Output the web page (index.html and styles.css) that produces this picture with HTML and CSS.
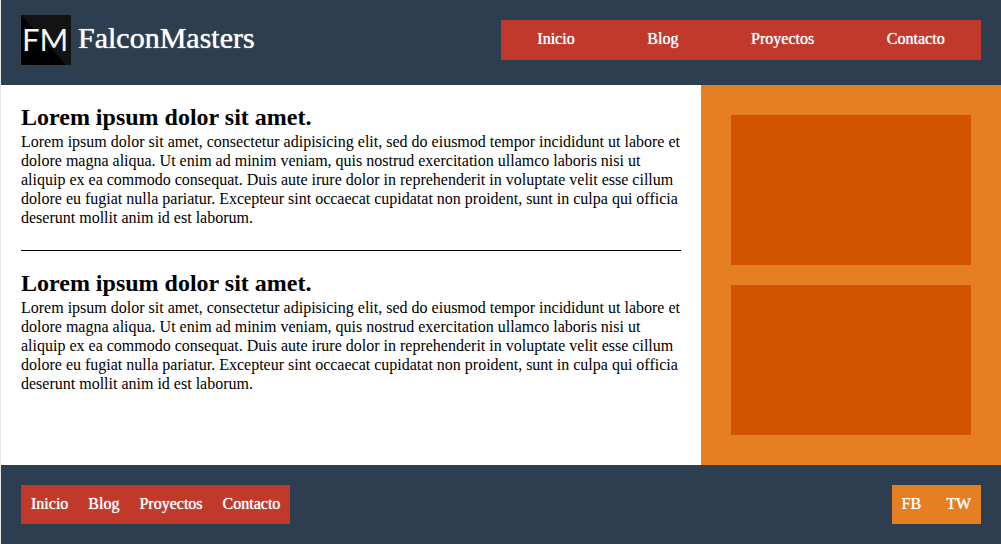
FILE: index.html
```html
<!DOCTYPE html>
<html lang="es">
<head>
  <meta charset="utf-8">
  <meta name="viewport" content="width=device-width, initial-scale=1">
  <title>FalconMasters</title>
  <link rel="stylesheet" href="styles.css">
</head>
<body>
  <header class="header">
    <a class="brand" href="#">
      <svg class="brand-mark" viewBox="0 0 50 50" aria-hidden="true">
        <rect width="50" height="50" fill="#000"/>
        <path d="M0 0H50V50H45Z" fill="#131313"/>
        <text class="brand-letters" x="1" y="36">FM</text>
      </svg>
      <span class="brand-name">FalconMasters</span>
    </a>
    <nav class="main-nav" aria-label="Principal">
      <a href="#">Inicio</a>
      <a href="#">Blog</a>
      <a href="#">Proyectos</a>
      <a href="#">Contacto</a>
    </nav>
  </header>

  <div class="content">
    <main class="main">
      <article class="post">
        <h2 class="post-title">Lorem ipsum dolor sit amet.</h2>
        <p class="post-text">Lorem ipsum dolor sit amet, consectetur adipisicing elit, sed do eiusmod tempor incididunt ut labore et dolore magna aliqua. Ut enim ad minim veniam, quis nostrud exercitation ullamco laboris nisi ut aliquip ex ea commodo consequat. Duis aute irure dolor in reprehenderit in voluptate velit esse cillum dolore eu fugiat nulla pariatur. Excepteur sint occaecat cupidatat non proident, sunt in culpa qui officia deserunt mollit anim id est laborum.</p>
      </article>
      <article class="post">
        <h2 class="post-title">Lorem ipsum dolor sit amet.</h2>
        <p class="post-text">Lorem ipsum dolor sit amet, consectetur adipisicing elit, sed do eiusmod tempor incididunt ut labore et dolore magna aliqua. Ut enim ad minim veniam, quis nostrud exercitation ullamco laboris nisi ut aliquip ex ea commodo consequat. Duis aute irure dolor in reprehenderit in voluptate velit esse cillum dolore eu fugiat nulla pariatur. Excepteur sint occaecat cupidatat non proident, sunt in culpa qui officia deserunt mollit anim id est laborum.</p>
      </article>
    </main>
    <aside class="sidebar">
      <div class="widget"></div>
      <div class="widget"></div>
    </aside>
  </div>

  <footer class="footer">
    <nav class="footer-nav" aria-label="Pie de página">
      <a href="#">Inicio</a>
      <a href="#">Blog</a>
      <a href="#">Proyectos</a>
      <a href="#">Contacto</a>
    </nav>
    <nav class="social" aria-label="Redes sociales">
      <a href="#">FB</a>
      <a href="#">TW</a>
    </nav>
  </footer>
</body>
</html>
```
FILE: styles.css
```css
* {
  box-sizing: border-box;
  margin: 0;
  padding: 0;
}

body {
  border-left: 1px solid #e6e6e6;
  background: #fff;
  color: #000;
  font: 16px/19px "Liberation Serif", "Times New Roman", serif;
}

a {
  color: #fff;
  text-decoration: none;
  text-shadow: 0 0 1px #fff;
}

.header {
  display: flex;
  justify-content: space-between;
  align-items: flex-start;
  padding: 15px 20px 20px;
  background: #2d3e50;
}

.brand {
  display: flex;
  gap: 7px;
}

.brand-mark {
  width: 50px;
  height: 50px;
}

.brand-letters {
  fill: #f4f4f4;
  font: 31px Lato, sans-serif;
  text-shadow: none;
}

.brand-name {
  font-size: 30px;
  line-height: 46px;
}

.main-nav {
  display: flex;
  justify-content: space-around;
  width: 50%;
  margin-top: 5px;
  padding: 9px 0 12px;
  background: #c0392b;
}

.content {
  display: grid;
  grid-template-columns: 7fr 3fr;
}

.main {
  padding: 20px;
}

.post + .post {
  margin-top: 23px;
  padding-top: 20px;
  border-top: 1px solid #000;
}

.post-title {
  margin-bottom: 2px;
  font-size: 24px;
  line-height: 25px;
}

.sidebar {
  display: flex;
  flex-direction: column;
  gap: 20px;
  padding: 30px;
  background: #e67e22;
}

.widget {
  height: 150px;
  background: #d35400;
}

.footer {
  display: flex;
  justify-content: space-between;
  padding: 20px;
  background: #2d3e50;
}

.footer-nav,
.social {
  display: flex;
  padding: 9px 10px 11px;
}

.footer-nav {
  gap: 20px;
  background: #c0392b;
}

.social {
  gap: 25px;
  background: #e67e22;
}
```
